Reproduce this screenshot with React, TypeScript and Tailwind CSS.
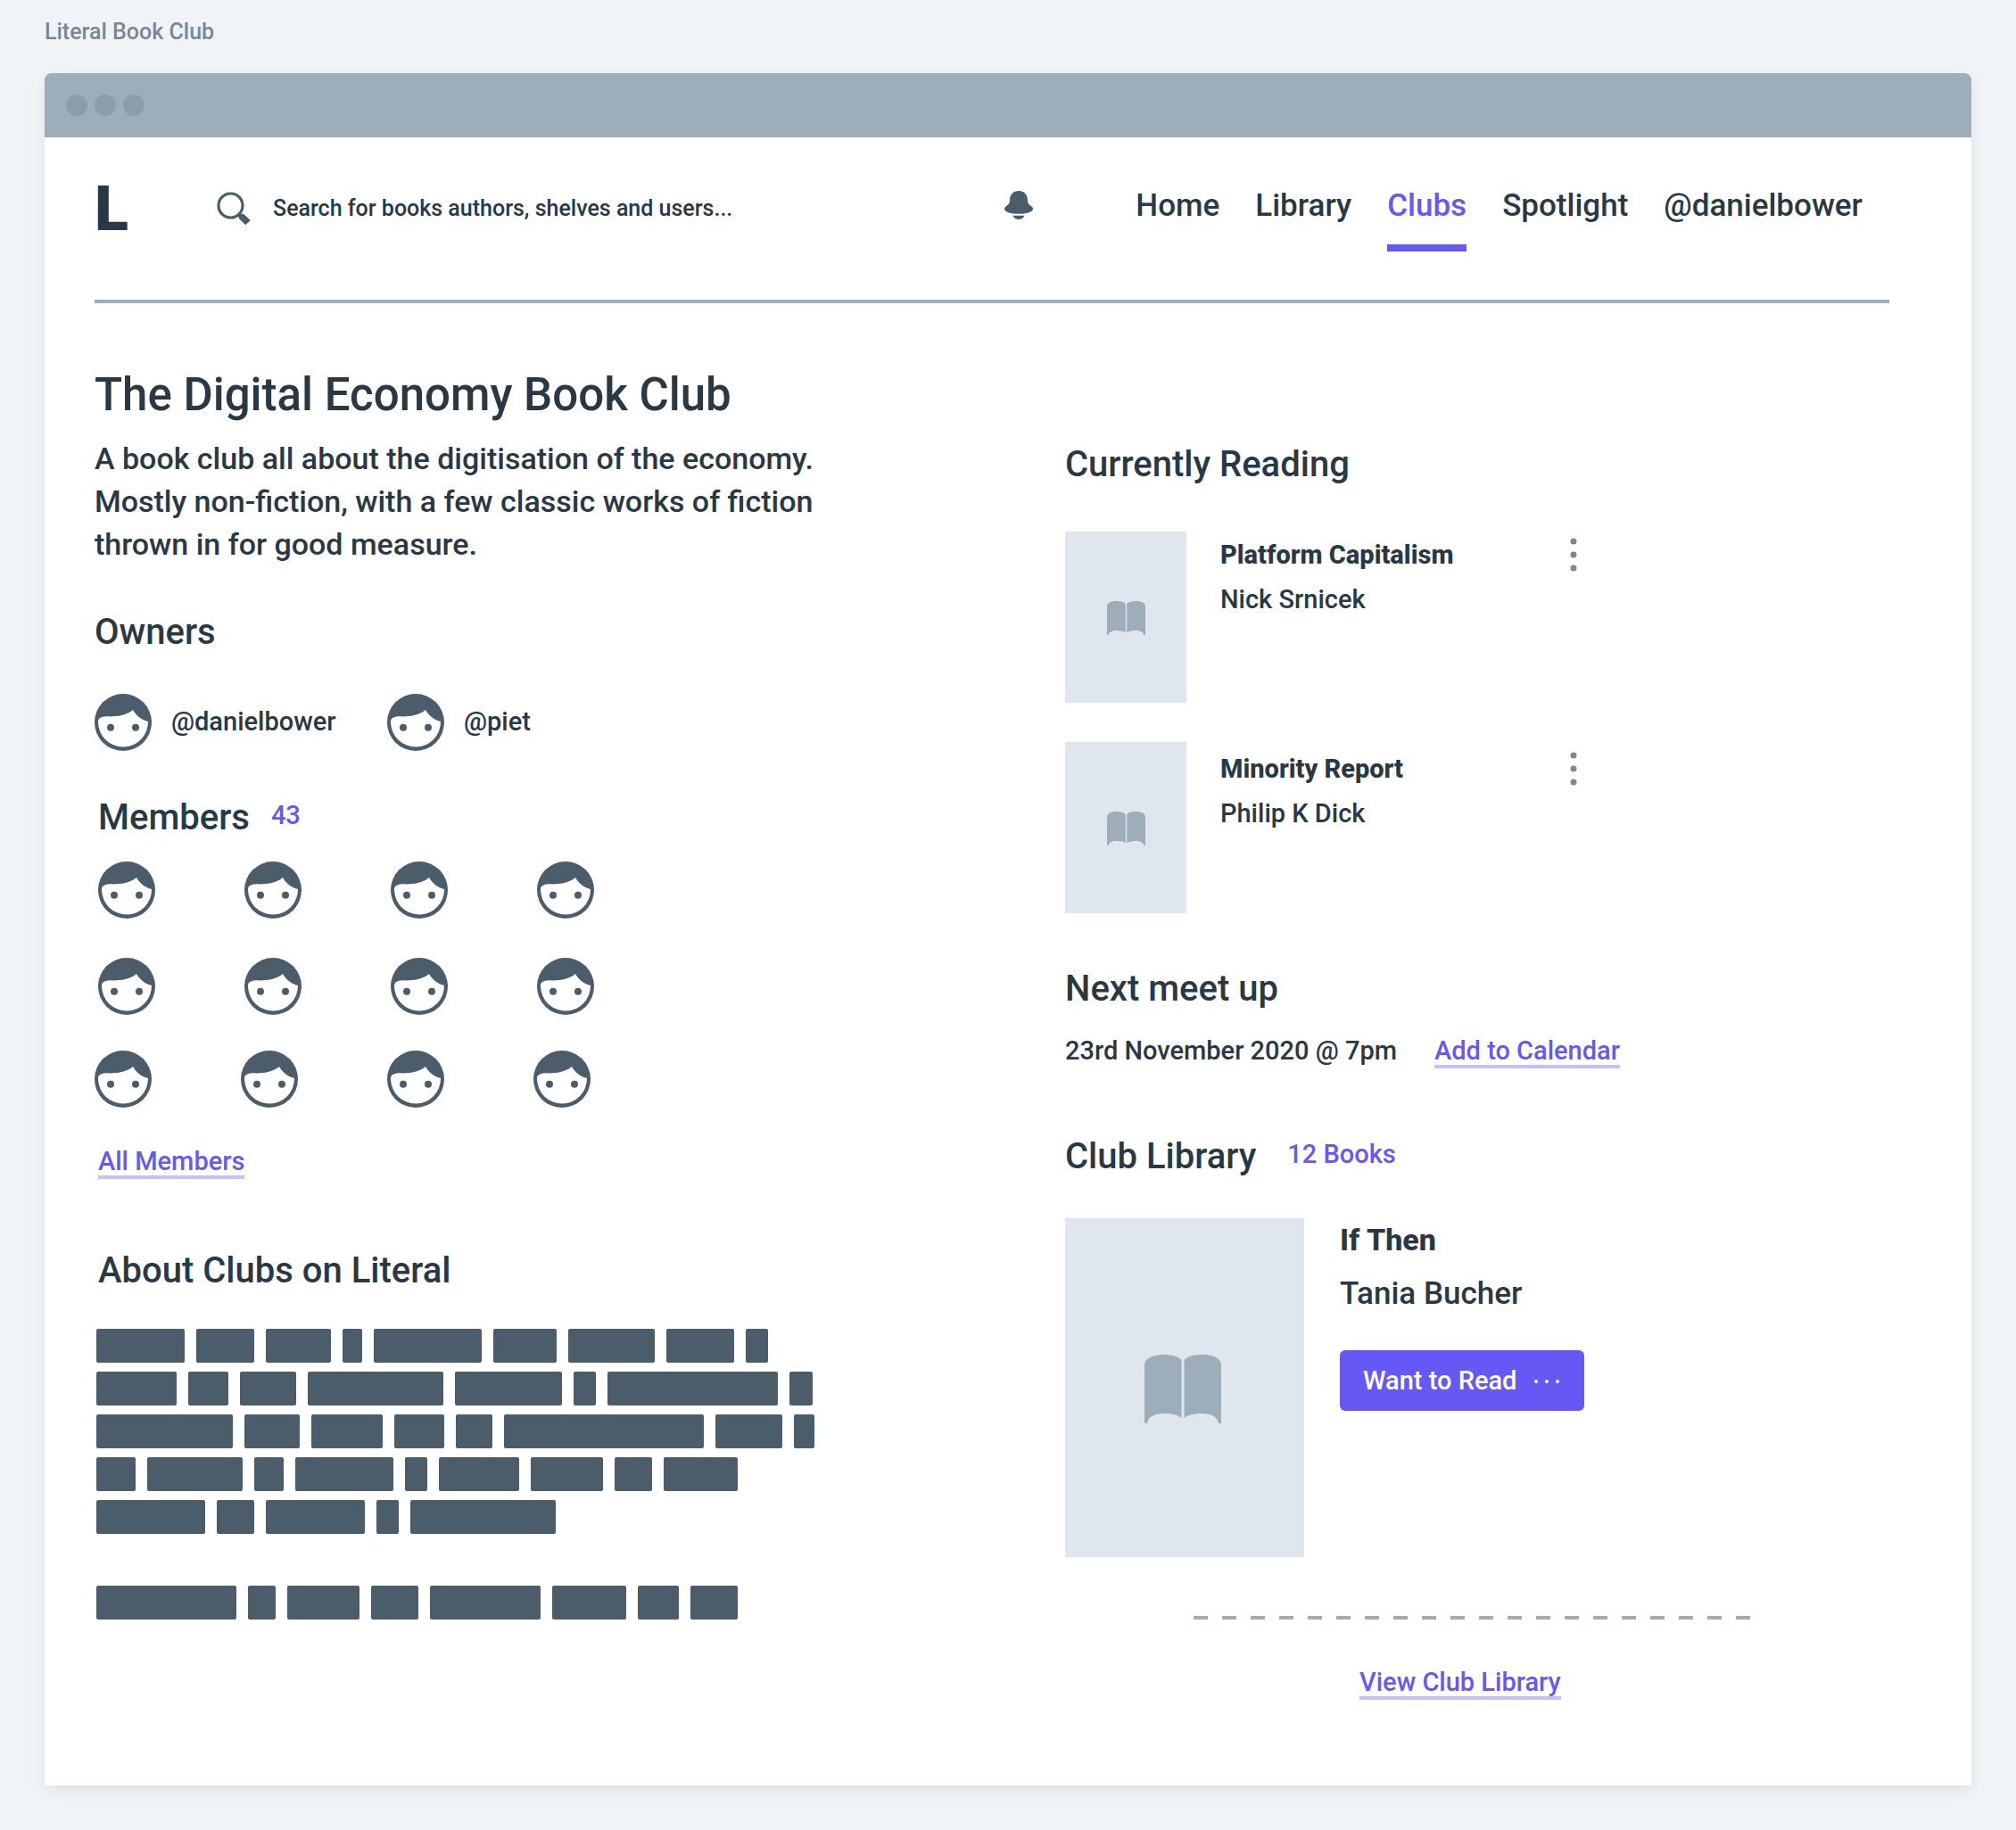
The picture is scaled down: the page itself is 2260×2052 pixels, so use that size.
const NAV = ["Home", "Library", "Clubs", "Spotlight", "@danielbower"];

const READING = [
  { title: "Platform Capitalism", author: "Nick Srnicek" },
  { title: "Minority Report", author: "Philip K Dick" },
];

const ABOUT = [
  [
    [99, 65, 73, 22, 121, 71, 97, 76, 25],
    [90, 45, 63, 152, 120, 25, 191, 26],
    [153, 62, 80, 56, 41, 224, 75, 23],
    [44, 107, 33, 110, 25, 90, 81, 42, 83],
    [122, 42, 111, 25, 163],
  ],
  [[157, 31, 81, 53, 124, 83, 46, 53]],
];

function Avatar() {
  return (
    <svg viewBox="0 0 64 64" className="size-16 shrink-0" aria-hidden="true">
      <circle cx="32" cy="32" r="32" fill="#4b5c6a" />
      <path
        d="M4.3 29C6 26.5 9 25.3 13 25.3C22 25.6 34 25.5 43 18C47 25 53 29.5 60 31A28 28 0 0 1 4 32C4 31 4 30 4.3 29Z"
        fill="#fff"
      />
      <circle cx="18" cy="37.7" r="4" fill="#4b5c6a" />
      <circle cx="46" cy="37.7" r="4" fill="#4b5c6a" />
    </svg>
  );
}

function Book({ className }: { className: string }) {
  return (
    <svg viewBox="0 0 86 77" className={className} fill="#9dadb9" aria-hidden="true">
      <path d="M0 12C0 4 10 0 21 0C31 0 38 2 41.5 6V71C38 67.5 31 66 22 66C10 66 4 70 3 77H0Z" />
      <path d="M86 12C86 4 76 0 65 0C55 0 48 2 44.5 6V71C48 67.5 55 66 64 66C76 66 82 70 83 77H86Z" />
    </svg>
  );
}

function AvatarRow() {
  return (
    <div className="flex gap-[100px]">
      {[0, 1, 2, 3].map((i) => (
        <Avatar key={i} />
      ))}
    </div>
  );
}

function Heading({ children }: { children: string }) {
  return <h2 className="text-[40px] leading-[50px] font-medium">{children}</h2>;
}

function TextLink({ children }: { children: string }) {
  return (
    <a
      href="#"
      className="inline-block border-b-4 border-[#c6bffb] text-[29px] leading-8 text-[#6558f5]"
    >
      {children}
    </a>
  );
}

function Header() {
  return (
    <header className="flex items-start border-b-4 border-[#9dadb9] pt-10 pr-7 pb-[54px]">
      <a href="#" className="w-[136px] shrink-0 text-[70px] leading-20 font-black">
        L
      </a>
      <label className="flex h-20 flex-1 items-center gap-6">
        <svg viewBox="0 0 40 40" className="size-10 shrink-0" aria-hidden="true">
          <circle cx="16.5" cy="16.5" r="13.5" fill="none" stroke="#4b5c6a" strokeWidth="3.2" />
          <path
            d="M31 25.7L38.7 33L33.3 38.3L26 31.3L25.7 29.2L24 27.3L27 25L28.7 26.3Z"
            fill="#4b5c6a"
          />
        </svg>
        <input
          type="search"
          aria-label="Search"
          placeholder="Search for books authors, shelves and users..."
          className="w-full max-w-[600px] bg-transparent text-[25px] leading-8 font-medium outline-none placeholder:text-[#283845] placeholder:opacity-100"
        />
      </label>
      <button type="button" aria-label="Notifications" className="mt-5 mr-[115px] shrink-0">
        <svg viewBox="0 0 32 32" className="size-8" fill="#4b5c6a" aria-hidden="true">
          <path d="M16 0C21.5 0 26 4 26 10C26 13 26.5 14.5 28.5 16C30.5 17.3 32 18.5 32 20.3C32 23.8 25 25.8 16 25.8C7 25.8 0 23.8 0 20.3C0 18.5 1.5 17.3 3.5 16C5.5 14.5 6 13 6 10C6 4 10.5 0 16 0Z" />
          <path d="M9.5 27.7H22.5C21.5 30.5 19 32 16 32C13 32 10.5 30.5 9.5 27.7Z" />
        </svg>
      </button>
      <nav className="mt-4 flex gap-10 pr-0.5 text-[35px] leading-[42px]">
        {NAV.map((item) => (
          <a
            key={item}
            href="#"
            className={
              item === "Clubs"
                ? "border-b-8 border-[#6558f5] pb-[22px] text-[#6558f5]"
                : "border-b-8 border-transparent pb-[22px]"
            }
          >
            {item}
          </a>
        ))}
      </nav>
    </header>
  );
}

function ClubColumn() {
  return (
    <div className="pt-[71px]">
      <h1 className="text-[51px] leading-16 font-medium">The Digital Economy Book Club</h1>
      <p className="mt-[15px] max-w-[840px] text-[34px] leading-[48px]">
        A book club all about the digitisation of the economy. Mostly non-fiction, with a few
        classic works of fiction thrown in for good measure.
      </p>

      <section className="mt-[50px]">
        <Heading>Owners</Heading>
        <div className="mt-11 flex text-[29px]">
          <a href="#" className="flex w-[328px] items-center gap-[22px]">
            <Avatar />
            @danielbower
          </a>
          <a href="#" className="flex items-center gap-[22px]">
            <Avatar />
            @piet
          </a>
        </div>
      </section>

      <section className="mt-[50px] pl-1">
        <div className="flex items-start gap-6">
          <Heading>Members</Heading>
          <span className="pt-1.5 text-[29px] leading-8 text-[#6558f5]">43</span>
        </div>
        <div className="mt-6 flex flex-col gap-11">
          <AvatarRow />
          <AvatarRow />
        </div>
        <div className="mt-10 -ml-1">
          <AvatarRow />
        </div>
        <div className="mt-11 flex">
          <TextLink>All Members</TextLink>
        </div>
      </section>

      <section className="mt-[78px] pl-0.5">
        <div className="pl-0.5">
          <Heading>About Clubs on Literal</Heading>
        </div>
        <div className="mt-10 flex flex-col gap-[58px]">
          {ABOUT.map((paragraph, p) => (
            <div key={p} className="flex flex-col gap-2.5">
              {paragraph.map((line, l) => (
                <div key={l} className="flex gap-[13px]">
                  {line.map((width, w) => (
                    <span key={w} className="h-[38px] rounded-xs bg-[#4b5c6a]" style={{ width }} />
                  ))}
                </div>
              ))}
            </div>
          ))}
        </div>
      </section>
    </div>
  );
}

function ReadingColumn() {
  return (
    <div className="pt-[156px]">
      <section>
        <Heading>Currently Reading</Heading>
        <div className="mt-[50px] flex gap-[38px]">
          <div className="flex flex-col gap-11">
            {READING.map((book) => (
              <div
                key={book.title}
                className="flex h-48 w-[136px] items-center justify-center bg-[#dfe6ee] pt-0.5"
              >
                <Book className="w-[43px]" />
              </div>
            ))}
          </div>
          <div className="flex w-[400px] flex-col gap-[150px] pt-1.5">
            {READING.map((book) => (
              <div key={book.title} className="flex items-start justify-between">
                <div className="text-[29px] leading-10">
                  <h3 className="font-extrabold">{book.title}</h3>
                  <p className="mt-2.5">{book.author}</p>
                </div>
                <button type="button" aria-label={`Options for ${book.title}`} className="pt-px">
                  <svg viewBox="0 0 8 38" className="h-[38px] w-2" fill="#788896" aria-hidden="true">
                    <circle cx="4" cy="4" r="3.5" />
                    <circle cx="4" cy="19" r="3.5" />
                    <circle cx="4" cy="34" r="3.5" />
                  </svg>
                </button>
              </div>
            ))}
          </div>
        </div>
      </section>

      <section className="mt-[60px]">
        <Heading>Next meet up</Heading>
        <div className="mt-7 flex items-start gap-[42px]">
          <p className="text-[29px] leading-8">23rd November 2020 @ 7pm</p>
          <TextLink>Add to Calendar</TextLink>
        </div>
      </section>

      <section className="mt-[74px]">
        <div className="flex items-start gap-[35px]">
          <Heading>Club Library</Heading>
          <span className="pt-1.5 text-[29px] leading-8 text-[#6558f5]">12 Books</span>
        </div>
        <div className="mt-11 flex items-start gap-10">
          <div className="flex h-[380px] w-[268px] items-center justify-center bg-[#dfe6ee] pt-0.5 pr-1">
            <Book className="w-[86px]" />
          </div>
          <div>
            <h3 className="text-[34px] leading-[48px] font-extrabold">If Then</h3>
            <p className="mt-3 text-[35px] leading-[50px]">Tania Bucher</p>
            <button
              type="button"
              className="mt-[38px] flex h-[68px] items-center gap-5 rounded-md bg-[#6558f5] pt-0.5 pr-7 pl-[26px] text-[29px] font-medium text-white"
            >
              Want to Read
              <svg viewBox="0 0 28 4" className="h-1 w-7" fill="#fff" aria-hidden="true">
                <circle cx="2" cy="2" r="2" />
                <circle cx="14" cy="2" r="2" />
                <circle cx="26" cy="2" r="2" />
              </svg>
            </button>
          </div>
        </div>
        <div className="mt-[66px] ml-36 h-1 w-[624px] bg-[repeating-linear-gradient(to_right,#9dadb9_0_16px,transparent_16px_32px)]" />
        <div className="mt-[54px] ml-[330px] flex">
          <TextLink>View Club Library</TextLink>
        </div>
      </section>
    </div>
  );
}

export default function App() {
  return (
    <div className="min-h-screen bg-[#f0f4f7] px-[50px] pt-5 pb-[50px] font-['Roboto','Liberation_Sans',sans-serif] font-medium text-[#283845]">
      <p className="mb-[30px] text-[25px] leading-8 text-[#788896]">Literal Book Club</p>
      <main className="rounded-t-lg bg-white shadow-[0_6px_16px_rgba(0,0,0,0.07)]">
        <div className="flex h-[72px] items-center gap-2 rounded-t-lg bg-[#9dadb9] px-6">
          <span className="size-6 rounded-full bg-[#8b9caa]" />
          <span className="size-6 rounded-full bg-[#8b9caa]" />
          <span className="size-6 rounded-full bg-[#8b9caa]" />
        </div>
        <div className="pr-[92px] pb-24 pl-14">
          <Header />
          <div className="grid grid-cols-[272fr_231fr]">
            <ClubColumn />
            <ReadingColumn />
          </div>
        </div>
      </main>
    </div>
  );
}
